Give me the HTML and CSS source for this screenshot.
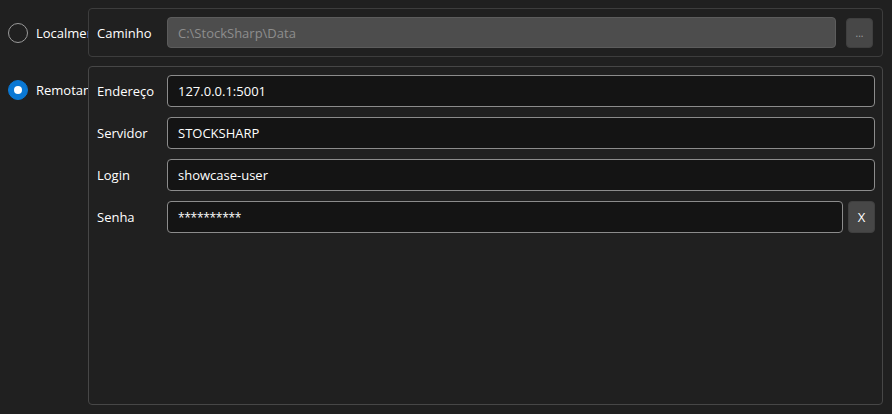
FILE: index.html
```html
<!DOCTYPE html>
<html>
<head>
<meta charset="utf-8">
<link rel="stylesheet" href="styles.css">
</head>
<body>
<div class="page">
  <div class="row row-local">
    <label class="radio-col">
      <span class="radio"></span>
      <span class="radio-text">Localmente</span>
    </label>
    <div class="frame frame-local">
      <div class="field">
        <span class="label">Caminho</span>
        <div class="input disabled">C:\StockSharp\Data</div>
        <button class="btn btn-dots">...</button>
      </div>
    </div>
  </div>
  <div class="row row-remote">
    <label class="radio-col">
      <span class="radio checked"></span>
      <span class="radio-text">Remotamente</span>
    </label>
    <div class="frame frame-remote">
      <div class="field">
        <span class="label">Endereço</span>
        <div class="input">127.0.0.1:5001</div>
      </div>
      <div class="field">
        <span class="label">Servidor</span>
        <div class="input">STOCKSHARP</div>
      </div>
      <div class="field">
        <span class="label">Login</span>
        <div class="input">showcase-user</div>
      </div>
      <div class="field">
        <span class="label">Senha</span>
        <div class="input pw">**********</div>
        <button class="btn btn-x">X</button>
      </div>
    </div>
  </div>
</div>
</body>
</html>
```
FILE: styles.css
```css
html, body {
  margin: 0;
  padding: 0;
  background: #202020;
  width: 892px;
  height: 414px;
  overflow: hidden;
}
.page {
  display: flex;
  flex-direction: column;
  gap: 9px;
  padding: 8px 9px 9px 0;
  height: 414px;
  box-sizing: border-box;
  font-family: "Open Sans", "Noto Sans", sans-serif;
  font-size: 13px;
  color: #ffffff;
}
.row {
  display: flex;
}
.row-remote {
  flex: 1;
}
.radio-col {
  width: 88px;
  flex: none;
  display: flex;
  align-items: flex-start;
  overflow: hidden;
  white-space: nowrap;
  padding-left: 8px;
  box-sizing: border-box;
}
.row-local .radio-col { padding-top: 15px; }
.row-remote .radio-col { padding-top: 14px; }
.radio {
  width: 20px;
  height: 20px;
  box-sizing: border-box;
  border: 1px solid #9a9a9a;
  border-radius: 50%;
  flex: none;
  margin-right: 8px;
  position: relative;
}
.radio.checked {
  background: #0a78d4;
  border-color: #0a78d4;
}
.radio.checked::after {
  content: "";
  position: absolute;
  left: 5px;
  top: 5px;
  width: 8px;
  height: 8px;
  border-radius: 50%;
  background: #ffffff;
}
.radio-text {
  line-height: 20px;
  font-size: 13px;
  min-width: 0;
  flex: 1 1 auto;
  overflow: hidden;
}
.frame {
  flex: 1;
  border: 1px solid #3d3d3d;
  border-radius: 4px;
  box-sizing: border-box;
}
.frame-local {
  padding: 8px 9px 8px 8px;
}
.frame-remote {
  padding: 8px 7px 8px 8px;
  display: flex;
  flex-direction: column;
  gap: 10px;
  border-color: #474747;
}
.field {
  display: flex;
  align-items: center;
}
.label {
  width: 70px;
  flex: none;
}
.input {
  flex: 1;
  height: 32px;
  box-sizing: border-box;
  border: 1px solid #8c8c8c;
  border-radius: 4px;
  background: #141414;
  padding: 0 10px;
  display: flex;
  align-items: center;
  color: #ffffff;
}
.input.pw {
  font-size: 12px;
  letter-spacing: -0.3px;
}
.input.disabled {
  height: 31px;
  background: #4d4d4d;
  border-color: #5c5c5c;
  color: #8e8e8e;
}
.btn {
  flex: none;
  box-sizing: border-box;
  border: 1px solid #3f3f3f;
  border-radius: 4px;
  background: #474747;
  color: #ffffff;
  font-family: "Open Sans", "Noto Sans", sans-serif;
  padding: 0;
}
.btn-dots {
  width: 27px;
  height: 30px;
  margin-left: 10px;
  color: #a0a0a0;
  font-size: 10px;
}
.btn-x {
  width: 27px;
  height: 32px;
  margin-left: 5px;
  font-size: 13px;
}
```
